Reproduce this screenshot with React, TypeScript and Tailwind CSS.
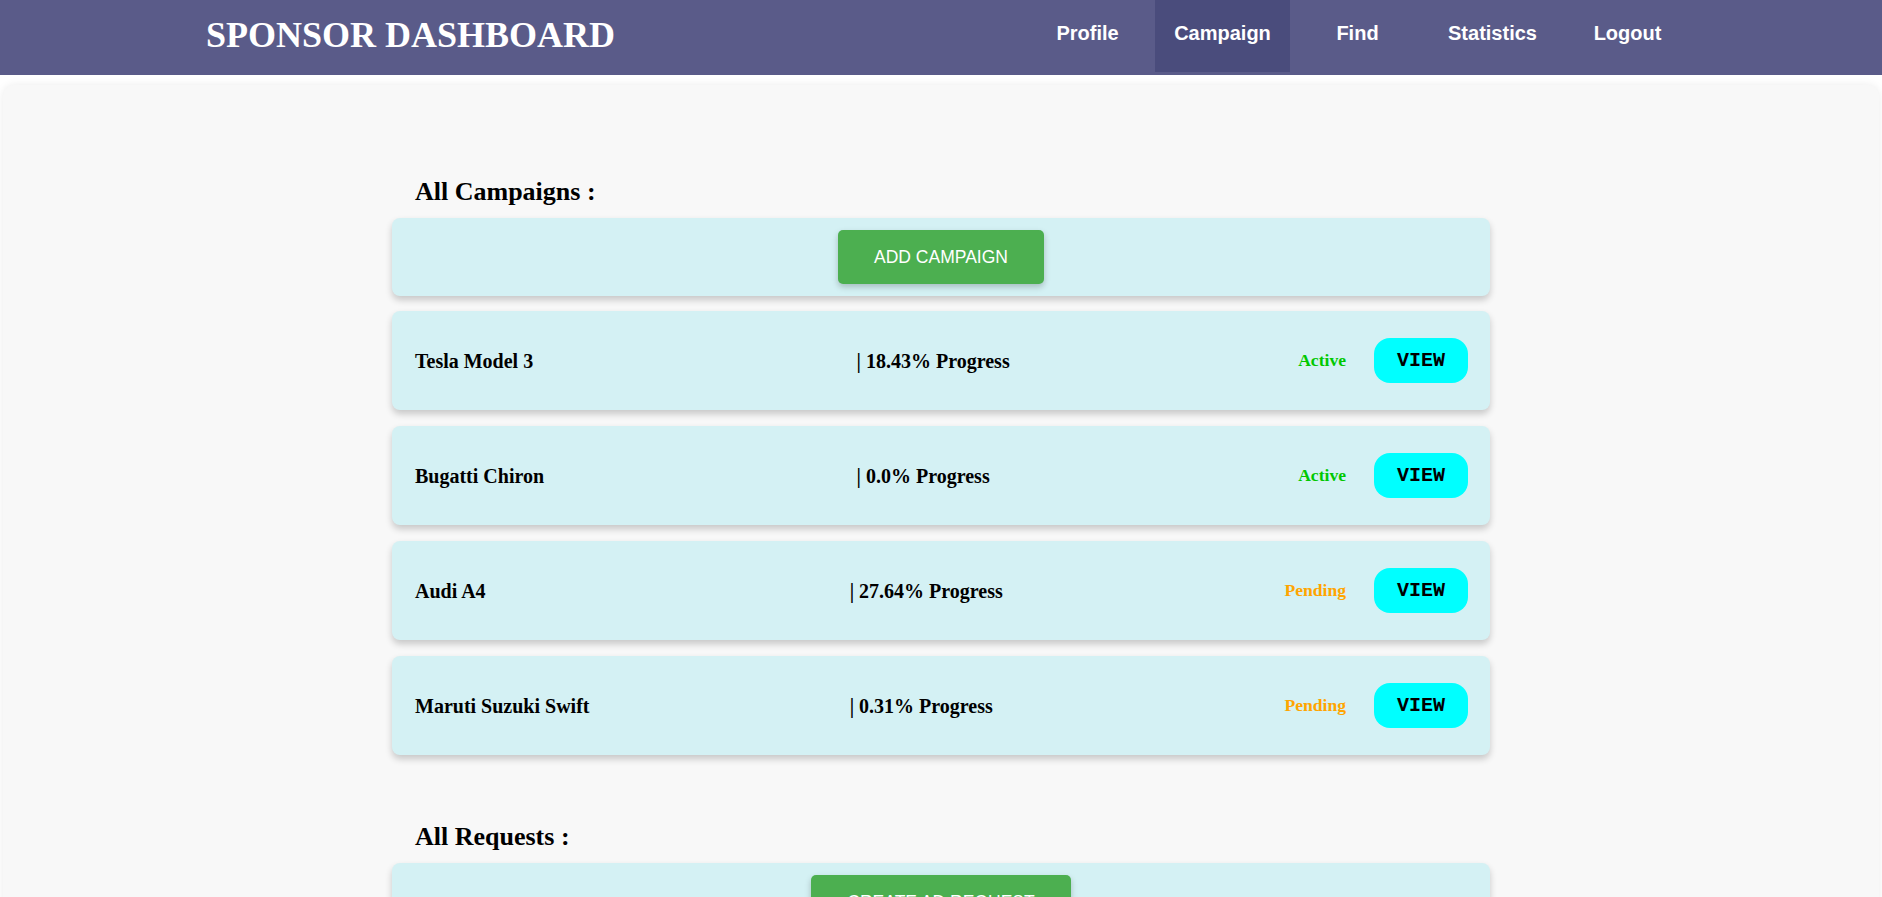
import React from "react";

const navItems = ["Profile", "Campaign", "Find", "Statistics", "Logout"];

const campaigns = [
  { name: "Tesla Model 3", progress: "18.43", status: "Active" },
  { name: "Bugatti Chiron", progress: "0.0", status: "Active" },
  { name: "Audi A4", progress: "27.64", status: "Pending" },
  { name: "Maruti Suzuki Swift", progress: "0.31", status: "Pending" },
];

const requests = [
  { name: "Tesla Model 3", influencer: "rahul_fit", status: "Pending" },
  { name: "Audi A4", influencer: "techguru", status: "Accepted" },
];

const serif = "font-['Liberation_Serif','Times_New_Roman',serif]";
const sans = "font-['Liberation_Sans',Arial,sans-serif]";

function Header() {
  return (
    <header className="h-[75px] bg-[#5a5b89] flex justify-between pl-[206px] pr-[187px]">
      <h1 className={`${serif} text-[36px] font-bold text-white leading-none self-center pb-[6px]`}>
        SPONSOR DASHBOARD
      </h1>
      <nav className="flex h-[72px]">
        {navItems.map((item) => (
          <a
            key={item}
            className={`${sans} w-[135px] flex items-center justify-center pb-[6px] text-[20px] font-bold text-white ${
              item === "Campaign" ? "bg-[#4a4c7c]" : ""
            }`}
          >
            {item}
          </a>
        ))}
      </nav>
    </header>
  );
}

function GreenButton({ label }: { label: string }) {
  return (
    <button
      className={`${sans} h-[54px] px-[36px] rounded-[5px] bg-[#4caf50] text-white text-[17.5px] uppercase shadow-[0_3px_6px_rgba(0,0,0,0.22)]`}
    >
      {label}
    </button>
  );
}

function Row({ name, middle, status }: { name: string; middle: string; status: string }) {
  const color = status === "Active" || status === "Accepted" ? "text-[#00c800]" : "text-[#ffa500]";
  return (
    <div className="flex items-center bg-[#d4f1f4] rounded-[8px] pl-[23px] pr-[22px] h-[99px] shadow-[0_4px_7px_rgba(0,0,0,0.2)]">
      <div className={`${serif} flex-1 text-[20px] font-bold text-black`}>{name}</div>
      <div className={`${serif} flex-1 text-[20px] font-bold text-black`}>| {middle}</div>
      <div className="flex items-center">
        <span className={`${serif} text-[17.6px] font-bold mr-[28px] ${color}`}>{status}</span>
        <button
          className={`font-['Liberation_Mono','Courier_New',monospace] h-[45px] w-[94px] rounded-[16px] bg-[#00ffff] text-black text-[20px] font-bold`}
        >
          VIEW
        </button>
      </div>
    </div>
  );
}

function Section({ title, action, children }: { title: string; action: string; children: React.ReactNode }) {
  return (
    <section className="flex flex-col">
      <h2 className={`${serif} text-[26px] font-bold text-black leading-[30px] pl-[23px] mb-[11px]`}>{title}</h2>
      <div className="bg-[#d4f1f4] rounded-[8px] h-[78px] flex items-center justify-center shadow-[0_4px_7px_rgba(0,0,0,0.2)] mb-[15px]">
        <GreenButton label={action} />
      </div>
      <div className="flex flex-col gap-[16px]">{children}</div>
    </section>
  );
}

export default function App() {
  return (
    <div className="min-h-screen bg-white">
      <Header />
      <main className="mx-[3px] mt-[10px] rounded-[12px] bg-[#f8f8f8] shadow-[0_0_8px_rgba(0,0,0,0.08)] pt-[92px] pb-[80px]">
        <div className="w-[1098px] mx-auto flex flex-col gap-[67px]">
          <Section title="All Campaigns :" action="Add Campaign">
            {campaigns.map((c) => (
              <Row key={c.name} name={c.name} middle={`${c.progress}% Progress`} status={c.status} />
            ))}
          </Section>
          <Section title="All Requests :" action="Create Ad Request">
            {requests.map((r) => (
              <Row key={r.name} name={r.name} middle={r.influencer} status={r.status} />
            ))}
          </Section>
        </div>
      </main>
    </div>
  );
}
